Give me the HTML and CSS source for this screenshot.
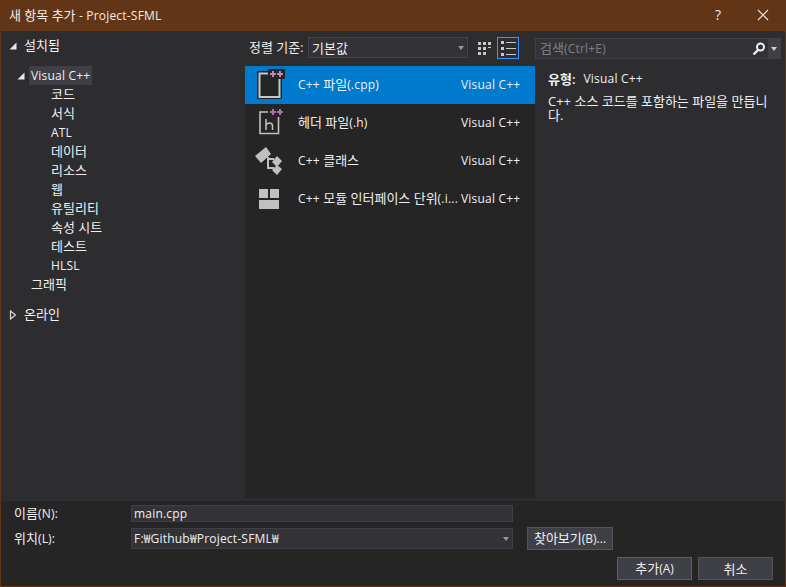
FILE: index.html
```html
<!DOCTYPE html>
<html lang="ko">
<head>
<meta charset="utf-8">
<title>새 항목 추가 - Project-SFML</title>
<link rel="stylesheet" href="styles.css">
</head>
<body>
<div class="dialog">
  <header class="titlebar">
    <span class="title"><span class="ko">새 항목 추가</span> - Project-SFML</span>
    <span class="help">?</span>
    <svg class="close" width="12" height="12" viewBox="0 0 12 12"><path d="M1 1l10 10M11 1L1 11" stroke="#e8e4e0" stroke-width="1.2" fill="none"/></svg>
  </header>
  <main class="body">
    <nav class="tree">
      <div class="node top first">
        <svg class="tri" width="8" height="8" viewBox="0 0 8 8"><path d="M7.5 0.5V7.5H0.5Z" fill="#e8e8e8"/></svg>
        <span class="ko">설치됨</span>
      </div>
      <div class="node vc">
        <svg class="tri" width="8" height="8" viewBox="0 0 8 8"><path d="M7.5 0.5V7.5H0.5Z" fill="#e8e8e8"/></svg>
        <span class="sel">Visual C++</span>
      </div>
      <div class="leaf ko">코드</div>
      <div class="leaf ko">서식</div>
      <div class="leaf">ATL</div>
      <div class="leaf ko">데이터</div>
      <div class="leaf ko">리소스</div>
      <div class="leaf ko">웹</div>
      <div class="leaf ko">유틸리티</div>
      <div class="leaf ko">속성 시트</div>
      <div class="leaf ko">테스트</div>
      <div class="leaf">HLSL</div>
      <div class="node sub ko">그래픽</div>
      <div class="node top online">
        <svg class="tri" width="8" height="10" viewBox="0 0 8 10"><path d="M1.5 1L6.5 5L1.5 9Z" fill="none" stroke="#d8d8d8" stroke-width="1.2"/></svg>
        <span class="ko">온라인</span>
      </div>
    </nav>
    <section class="center">
      <div class="toolbar">
        <span class="sort-label"><span class="ko">정렬 기준</span>:</span>
        <div class="combo sort"><span class="ko">기본값</span><i class="caret"></i></div>
        <button class="view">
          <svg width="17" height="17" viewBox="0 0 17 17" fill="#c8c8c8"><path d="M1 2h3v3H1zM6 2h3v3H6zM11 2h3v3h-3zM1 7h3v3H1zM6 7h3v3H6zM11 7h3v1h-3zM1 12h3v3H1zM6 12h3v3H6z"/></svg>
        </button>
        <button class="view active">
          <svg width="17" height="17" viewBox="0 0 17 17" fill="#c8c8c8"><path d="M1 1h3v3H1zM6 2h10v1H6zM1 7h3v3H1zM6 8h10v1H6zM1 13h3v3H1zM6 14h10v1H6z"/></svg>
        </button>
      </div>
      <ul class="list">
        <li class="item selected">
          <svg class="icon" width="30" height="30" viewBox="0 0 30 30">
            <rect x="2" y="2" width="25" height="28" rx="1" fill="#252526"/>
            <rect x="13" y="0" width="17" height="10" rx="1" fill="#252526"/>
            <path d="M13 4.500H4.500v23.500h20V10" fill="none" stroke="#c8c8c8" stroke-width="2"/>
            <path d="M15 5h6M18 2v6M22 5h6M25 2v6" stroke="#c586c0" stroke-width="2" fill="none"/>
          </svg>
          <span class="name">C++ <span class="ko">파일</span>(.cpp)</span><span class="lang">Visual C++</span>
        </li>
        <li class="item">
          <svg class="icon" width="30" height="30" viewBox="0 0 30 30">
            <path d="M13 5H5v21.500h18.500V10" fill="none" stroke="#c0c0c0" stroke-width="1.600"/>
            <path d="M11 12v11M11 18c1-1.500 2-2 3.500-2s3 .8 3 3v4" fill="none" stroke="#c0c0c0" stroke-width="1.500"/>
            <path d="M15 5h6M18 2v6M22 5h6M25 2v6" stroke="#b06fb0" stroke-width="2" fill="none"/>
          </svg>
          <span class="name"><span class="ko">헤더 파일</span>(.h)</span><span class="lang">Visual C++</span>
        </li>
        <li class="item">
          <svg class="icon" width="30" height="30" viewBox="0 0 30 30">
            <path d="M0 11L11 2l5 7L6 18zM17 17l5-6 5 5-5 6zM17 25l5-5 5 4-5 6z" fill="#c0c0c0"/>
            <path d="M13 12v11h6M13 14h6" fill="none" stroke="#c0c0c0" stroke-width="2"/>
          </svg>
          <span class="name">C++ <span class="ko">클래스</span></span><span class="lang">Visual C++</span>
        </li>
        <li class="item">
          <svg class="icon" width="30" height="30" viewBox="0 0 30 30" fill="#c0c0c0">
            <path d="M4 6h9v9H4zM15 6h9v9h-9zM4 17h20v9H4z"/>
          </svg>
          <span class="name clip">C++ <span class="ko">모듈 인터페이스 단위</span>(.i...</span><span class="lang">Visual C++</span>
        </li>
      </ul>
    </section>
    <aside class="details">
      <div class="search"><span class="ph"><span class="ko">검색</span>(Ctrl+E)</span>
        <svg class="lens" width="14" height="14" viewBox="0 0 14 14"><circle cx="8.500" cy="5" r="3.500" fill="none" stroke="#f0f0f0" stroke-width="2"/><path d="M6 8l-4.500 4.500" stroke="#f0f0f0" stroke-width="2.400"/></svg>
        <span class="drop"><i class="caret light"></i></span>
      </div>
      <div class="type"><b class="ko">유형:</b><span>Visual C++</span></div>
      <p class="desc">C++ 소스 코드를 포함하는 파일을 만듭니다.</p>
    </aside>
  </main>
  <footer class="footer">
    <div class="form-row name-row">
      <label><span class="ko">이름</span>(N):</label>
      <div class="field">main.cpp</div>
    </div>
    <div class="form-row loc-row">
      <label><span class="ko">위치</span>(L):</label>
      <div class="field">F:₩Github₩Project-SFML₩<i class="caret"></i></div>
      <button class="btn browse"><span class="ko">찾아보기</span>(B)...</button>
    </div>
    <div class="actions">
      <button class="btn primary"><span class="ko">추가</span>(A)</button>
      <button class="btn ko">취소</button>
    </div>
  </footer>
</div>
</body>
</html>
```
FILE: styles.css
```css
* { box-sizing: border-box; }
html, body { margin: 0; padding: 0; }
body {
  width: 786px;
  height: 587px;
  overflow: hidden;
  background: #623516;
  font: 12px/16px "Open Sans", "Noto Sans CJK KR", sans-serif;
  letter-spacing: .2px;
  color: #f0f0f0;
}
.ko { font-size: 13px; letter-spacing: 0; }
.dialog {
  width: 786px;
  height: 587px;
  display: flex;
  flex-direction: column;
  padding: 0 1px 1px;
}
.titlebar {
  height: 31px;
  flex: none;
  display: flex;
  align-items: center;
  padding: 0 0 1px 8px;
  color: #f0ece8;
}
.title { flex: 1; }
.help { width: 10px; font-size: 14px; margin-right: 34px; text-align: center; }
.close { margin-right: 16px; }
.body {
  flex: 1;
  min-height: 0;
  display: flex;
  background: #2d2d30;
}
.tree { width: 244px; flex: none; padding-top: 5px; }
.node { display: flex; align-items: center; height: 19px; }
.top { padding-left: 8px; }
.top span { margin-left: 7px; padding-bottom: 2px; }
.vc { padding-left: 16px; margin-top: 11px; height: 19px; }
.vc span.sel {
  margin-left: 4px;
  padding: 0 2px;
  height: 19px;
  line-height: 19px;
  background: #3f3f46;
}
.sub { padding: 0 0 2px 30px; }
.online { margin-top: 11px; }
.leaf { height: 19px; line-height: 19px; padding-left: 50px; }
.center { width: 290px; flex: none; display: flex; flex-direction: column; padding-bottom: 3px; }
.toolbar { height: 35px; flex: none; display: flex; align-items: center; padding: 0 0 2px 4px; }
.sort-label { width: 59px; flex: none; white-space: nowrap; }
.combo {
  width: 160px;
  height: 21px;
  border: 1px solid #434346;
  background: #333337;
  display: flex;
  align-items: center;
  justify-content: space-between;
  padding: 0 3px 0 3px;
}
.caret {
  display: block;
  width: 0;
  height: 0;
  border: 3.500px solid transparent;
  border-top: 4px solid #999;
  border-bottom: 0;
}
.view {
  width: 22px;
  height: 22px;
  padding: 1px 0 0;
  background: none;
  border: 1px solid transparent;
  margin-left: 6px;
  display: flex;
  align-items: center;
  justify-content: center;
}
.view.active { border-color: #3399ff; margin-left: 1px; }
.list { list-style: none; margin: 0; padding: 0; flex: 1; background: #252526; }
.item { height: 38px; display: flex; align-items: center; padding-left: 8px; }
.item.selected { background: #007acc; }
.icon { flex: none; margin: -2px 13px 0 2px; }
.name { width: 163px; flex: none; white-space: nowrap; overflow: hidden; padding-bottom: 2px; }
.lang { white-space: nowrap; }
.details { flex: 1; padding: 7px 4px 0 0; }
.search {
  height: 21px;
  background: #333337;
  border: 1px solid #3f3f46;
  display: flex;
  align-items: center;
  padding-left: 4px;
}
.ph { flex: 1; color: #808080; }
.lens { margin-right: 2px; }
.drop { width: 12px; align-self: stretch; background: #3f3f46; display: flex; align-items: center; justify-content: center; }
.caret.light { border-top-color: #d0d0d0; }
.type { margin: 12px 0 0 13px; display: flex; gap: 8px; }
.type b { font-weight: 600; }
.desc { margin: 7px 0 0 13px; width: 228px; font-size: 13px; letter-spacing: 0; line-height: 14px; word-break: break-all; }
.footer {
  height: 85px;
  flex: none;
  background: #252526;
  padding: 4px 0 0 13px;
  display: flex;
  flex-direction: column;
}
.form-row { display: flex; align-items: center; }
.form-row label { width: 117px; flex: none; }
.field {
  width: 382px;
  border: 1px solid #3f3f46;
  background: #333337;
  color: #f0f0f0;
  padding: 0 2px;
  display: flex;
  align-items: center;
  justify-content: space-between;
}
.name-row { height: 17px; }
.name-row .field { height: 17px; }
.loc-row { margin-top: 6px; height: 21px; }
.loc-row .field { height: 21px; padding-right: 3px; }
.btn {
  font: inherit;
  color: #f0f0f0;
  background: #3f3f46;
  border: 1px solid #555558;
  height: 23px;
  width: 75px;
  padding: 0;
}
.btn.ko { font-size: 13px; }
.browse { margin-left: 14px; width: 86px; white-space: nowrap; }
.actions { display: flex; justify-content: flex-end; gap: 6px; margin-top: 8px; padding-right: 12px; }
.primary { border-color: #007acc; }
```
